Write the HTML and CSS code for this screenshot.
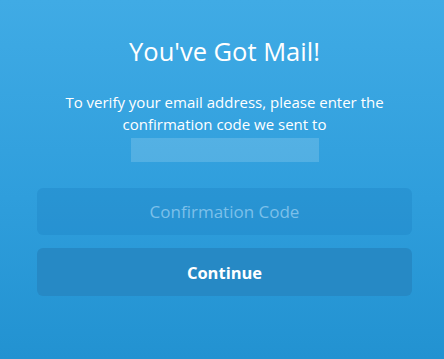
FILE: index.html
```html
<!DOCTYPE html>
<html lang="en">
<head>
<meta charset="UTF-8">
<meta name="viewport" content="width=device-width, initial-scale=1.0">
<title>Verify Email</title>
<link rel="stylesheet" href="styles.css">
</head>
<body>

<div class="verify">
  <h1>You've Got Mail!</h1>
  <p class="lead">To verify your email address, please enter the confirmation code we sent to</p>
  <div class="email-mask"></div>

  <form class="verify-form">
    <input class="code-input" type="text" placeholder="Confirmation Code">
    <button class="continue-btn" type="button">Continue</button>
  </form>
</div>

</body>
</html>
```

FILE: styles.css
```css
html, body { height: 100%; }
body {
  margin: 0;
  font-family: "Open Sans", "Noto Sans", sans-serif;
  color: #fff;
  background: linear-gradient(180deg, #40abe5 0%, #2f9edc 55%, #2292d1 100%);
}
.verify {
  padding: 33px 32px 0 37px;
  text-align: center;
}
.verify h1 {
  margin: 0;
  font-size: 25.5px;
  font-weight: 400;
  line-height: 36px;
}
.lead {
  margin: 22px auto 0;
  max-width: 350px;
  font-size: 15px;
  line-height: 22px;
}
.email-mask {
  width: 188px;
  height: 24px;
  margin: 3px auto 0;
  background: rgba(255,255,255,0.16);
}
.verify-form { margin-top: 26px; }
.code-input, .continue-btn {
  display: block;
  box-sizing: border-box;
  width: 100%;
  height: 47px;
  border: 0;
  border-radius: 6px;
  font-family: inherit;
  text-align: center;
}
.code-input {
  background: rgba(30,130,195,0.35);
  color: #fff;
  font-size: 17px;
  outline: none;
}
.code-input::placeholder { color: #7cc0ea; }
.continue-btn {
  margin-top: 13px;
  height: 48px;
  background: #2689c5;
  color: #fff;
  font-size: 16.5px;
  font-weight: 700;
}
```
